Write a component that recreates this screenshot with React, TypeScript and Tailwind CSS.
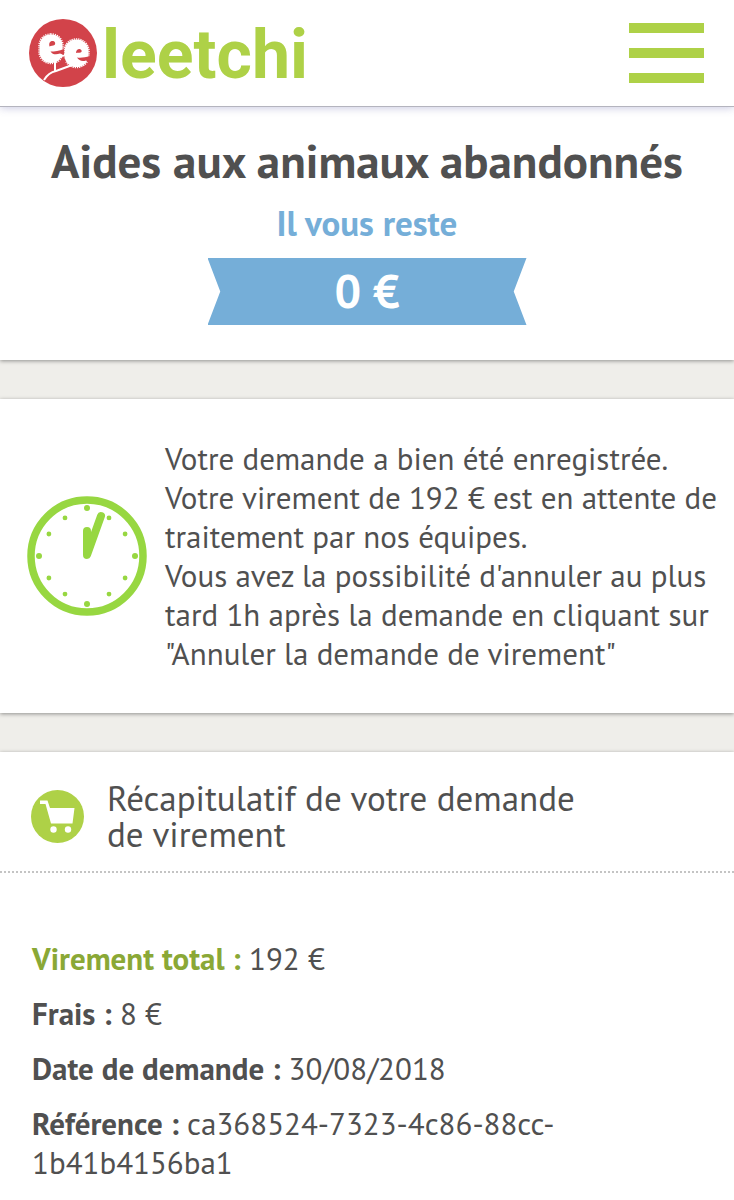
import React from 'react';

const LogoMark: React.FC = () => (
  <svg viewBox="0 0 68 68" className="w-[68px] h-[68px] shrink-0" aria-hidden="true">
    <circle cx="34" cy="34" r="34" fill="#d2434a" />
    <path d="M26 42 V53 M15 61 C18 56 22 53 27 52 L46 45 M24 40 L38 35" fill="none" stroke="#fff" strokeWidth="2" />
    {/* tree crowns */}
    <g fill="#fff">
      <rect x="10.5" y="15.5" width="23" height="28.5" rx="11" />
      <rect x="35.5" y="20.5" width="24" height="27.5" rx="11.5" />
    </g>
    <g fill="none" stroke="#fff" strokeWidth="1.4" strokeDasharray="1.2 1">
      <rect x="10" y="15" width="24" height="29.5" rx="11.5" />
      <rect x="35" y="20" width="25" height="28.5" rx="12" />
    </g>
    <g fill="#d2434a">
      <path d="M20.5 27.5 C19.5 23.5 21.5 22 23.5 22 C26 22 27 24.5 25.5 26 C24 27 22 26.5 20.5 27.5 Z" />
      <path d="M21.5 32.5 C26 32.5 30 32 35 30 L35 36 L31 34.5 C27 36 23.5 35.5 21.5 32.5 Z" />
      <path d="M47 34 C47 31.5 48.5 30 50.5 30 C53 30.5 53.5 33 51.5 33.5 C50 34 48.5 33.5 47 34 Z" />
      <path d="M48 38.5 C52 39 56 38.5 61 37 L61 44 L57 41.5 C53 43 50 41.5 48 38.5 Z" />
      <path d="M31 46 L37 43 L35 38 L33 41 Z" />
    </g>
  </svg>
);

const ClockIcon: React.FC = () => {
  const ticks = Array.from({ length: 12 }, (_, i) => (i * Math.PI) / 6);
  return (
    <svg viewBox="0 0 120 120" className="w-[120px] h-[120px] shrink-0" fill="#97d741" stroke="#97d741" aria-hidden="true">
      <circle cx="60" cy="60" r="56" fill="none" strokeWidth="7.5" />
      {ticks.map((a, i) => (
        <circle
          key={i}
          cx={60 + Math.sin(a) * (i % 3 ? 44 : 48)}
          cy={60 - Math.cos(a) * (i % 3 ? 44 : 48)}
          r={i % 3 ? 2.4 : 3}
          stroke="none"
        />
      ))}
      <path d="M60 35 V59 L74 20" fill="none" strokeWidth="8" strokeLinecap="round" strokeLinejoin="round" />
    </svg>
  );
};

const CartIcon: React.FC = () => (
  <svg viewBox="0 0 53 53" className="w-[53px] h-[53px] shrink-0" aria-hidden="true">
    <circle cx="26.5" cy="26.5" r="26.5" fill="#aed147" />
    <path d="M9 10.5 H16.5 L19 18 H43.5 L41.5 33.5 H20 L14.5 14 H9 Z" fill="#fff" />
    <circle cx="22.5" cy="39.5" r="3.2" fill="#fff" />
    <circle cx="37" cy="39.5" r="3.2" fill="#fff" />
  </svg>
);

const details = [
  { label: 'Virement total :', value: '192 €', highlight: true },
  { label: 'Frais :', value: '8 €' },
  { label: 'Date de demande :', value: '30/08/2018' },
  { label: 'Référence :', value: 'ca368524-7323-4c86-88cc-1b41b4156ba1' },
];

const App: React.FC = () => {
  return (
    <div className="min-h-screen bg-white font-['PT_Sans','Noto_Sans',sans-serif] text-[#505050]">
      <header className="relative flex items-center justify-between h-[107px] pl-[29px] pr-[30px] bg-white border-b border-[#b4b4be] shadow-[0_1px_8px_rgba(80,80,160,0.3)]">
        <a href="#" className="flex items-center gap-[5px]" aria-label="leetchi">
          <LogoMark />
          <span className="pt-1 font-['Roboto',sans-serif] font-bold text-[68px] leading-none text-[#aed147]">leetchi</span>
        </a>
        <button type="button" aria-label="Menu" className="flex flex-col gap-[15px] w-[75px] cursor-pointer">
          <span className="w-full h-[10px] bg-[#aed147]"></span>
          <span className="w-full h-[10px] bg-[#aed147]"></span>
          <span className="w-full h-[10px] bg-[#aed147]"></span>
        </button>
      </header>

      <main className="flex flex-col gap-[39px] bg-[#efeeea]">
        {/* Remaining amount */}
        <section className="flex flex-col items-center pt-7 pb-[35px] bg-white shadow-[0_1px_4px_rgba(0,0,0,0.4)]">
          <h1 className="font-bold text-[47px] leading-[52px] text-center">Aides aux animaux abandonnés</h1>
          <p className="mt-4 font-bold text-[35px] leading-10 text-[#75aed8]">Il vous reste</p>
          <div className="mt-[15px] flex items-center justify-center w-[319px] h-[67px] bg-[#75aed8] text-white font-bold text-[47px] [clip-path:polygon(0_0,100%_0,96%_50%,100%_100%,0_100%,4%_50%)]">
            0 €
          </div>
        </section>

        {/* Transfer status */}
        <section className="flex items-center gap-[18px] py-10 pl-[27px] pr-2 bg-white shadow-[0_1px_4px_rgba(0,0,0,0.4)]">
          <ClockIcon />
          <p className="text-[31px] leading-[39px]">
            Votre demande a bien été enregistrée.
            <br />
            Votre virement de 192 € est en attente de traitement par nos équipes.
            <br />
            Vous avez la possibilité d'annuler au plus tard 1h après la demande en cliquant sur "Annuler la demande de virement"
          </p>
        </section>

        {/* Summary */}
        <section className="bg-white shadow-[0_1px_4px_rgba(0,0,0,0.4)]">
          <div className="flex items-center gap-[23px] pt-7 pb-[19px] pl-[31px] border-b-2 border-dotted border-[#c4c4c4]">
            <CartIcon />
            <h2 className="max-w-[500px] text-[35px] leading-9">Récapitulatif de votre demande de virement</h2>
          </div>
          <dl className="flex flex-col gap-4 pt-[66px] pb-8 px-8 text-[31px] leading-[39px]">
            {details.map((item) => (
              <div key={item.label} className="max-w-[560px]">
                <dt className={`inline font-bold ${item.highlight ? 'text-[#8aa836]' : ''}`}>{item.label}</dt>{' '}
                <dd className="inline">{item.value}</dd>
              </div>
            ))}
          </dl>
        </section>
      </main>
    </div>
  );
};

export default App;
